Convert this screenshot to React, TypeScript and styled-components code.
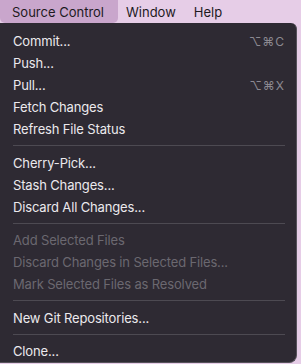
import React from 'react'
import styled, { createGlobalStyle } from 'styled-components'

const Global = createGlobalStyle`
  html, body {
    margin: 0;
    padding: 0;
    background: #2e2a33;
  }
  body {
    font-family: Inter, "Liberation Sans", sans-serif;
    -webkit-font-smoothing: antialiased;
  }
`

type Item = { label?: string; keys?: string; disabled?: boolean; sep?: boolean }

const items: Item[] = [
  { label: 'Commit...', keys: '⌥⌘C' },
  { label: 'Push...' },
  { label: 'Pull...', keys: '⌥⌘X' },
  { label: 'Fetch Changes' },
  { label: 'Refresh File Status' },
  { sep: true },
  { label: 'Cherry-Pick...' },
  { label: 'Stash Changes...' },
  { label: 'Discard All Changes...' },
  { sep: true },
  { label: 'Add Selected Files', disabled: true },
  { label: 'Discard Changes in Selected Files...', disabled: true },
  { label: 'Mark Selected Files as Resolved', disabled: true },
  { sep: true },
  { label: 'New Git Repositories...' },
  { sep: true },
  { label: 'Clone...' },
]

const App = () => {
  return (
    <Page>
      <Global />
      <MenuBar>
        <BarItem active>Source Control</BarItem>
        <BarItem>Window</BarItem>
        <BarItem>Help</BarItem>
      </MenuBar>
      <Menu>
        {items.map((it, i) =>
          it.sep ? (
            <Separator key={i} />
          ) : (
            <Row key={i} disabled={it.disabled}>
              <span>{it.label}</span>
              {it.keys && <Keys>{it.keys}</Keys>}
            </Row>
          )
        )}
      </Menu>
    </Page>
  )
}

export default App

const Page = styled.div`
  width: 301px;
  height: 364px;
  background: #e6cde7;
  overflow: hidden;
`
const MenuBar = styled.div`
  display: flex;
  height: 23px;
  align-items: stretch;
  background: #e6cde7;
`
const BarItem = styled.div<{ active?: boolean }>`
  display: flex;
  align-items: center;
  padding: ${p => (p.active ? '0 14px 0 12px' : '0 10px 0 8px')};
  font-size: 13px;
  color: #1d1a1e;
  border-radius: ${p => (p.active ? '0 0 5px 5px' : '0')};
  background: ${p => (p.active ? '#c9a6cc' : 'transparent')};
`
const Menu = styled.div`
  width: 298px;
  height: 340px;
  box-sizing: border-box;
  margin-left: -1px;
  padding: 7px 0 0 13px;
  background: #2e2a33;
  border: 1px solid #55525a;
  border-top: none;
  border-radius: 0 6px 8px 0;
  display: flex;
  flex-direction: column;
`
const Row = styled.div<{ disabled?: boolean }>`
  display: flex;
  flex-shrink: 0;
  justify-content: space-between;
  align-items: center;
  height: 22px;
  padding-right: 11px;
  font-size: 13px;
  letter-spacing: -0.15px;
  color: ${p => (p.disabled ? '#6b6870' : '#ebe9ed')};
`
const Keys = styled.span`
  color: #8c8991;
  font-size: 12px;
  letter-spacing: 1px;
`
const Separator = styled.div`
  flex-shrink: 0;
  height: 1px;
  margin: 5px 11px 5.5px 0;
  background: #4d4a52;
`
